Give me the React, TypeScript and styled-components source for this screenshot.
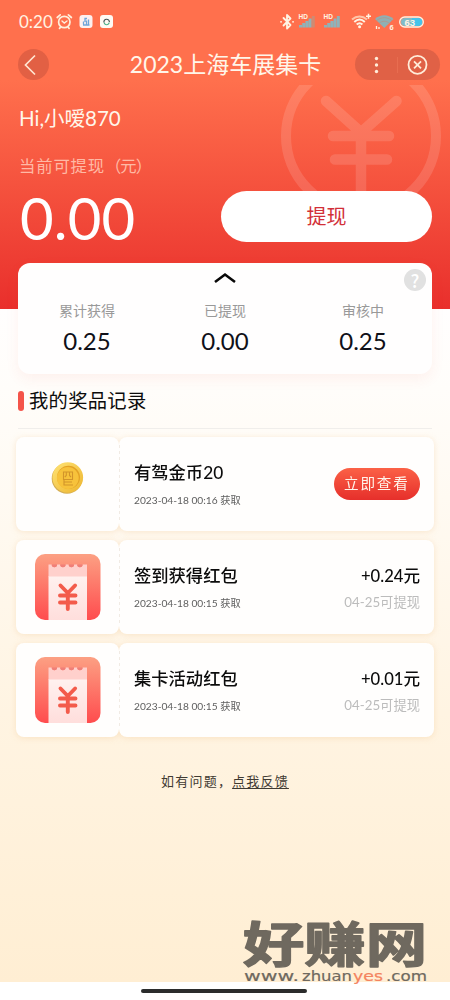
import React from "react";
import styled, { createGlobalStyle } from "styled-components";

const Global = createGlobalStyle`
  * { box-sizing: border-box; }
  body { margin: 0; background: #fff; }
`;

const Page = styled.div`
  position: relative;
  width: 450px;
  height: 1000px;
  overflow: hidden;
  display: flex;
  flex-direction: column;
  font-family: Lato, "Noto Sans CJK SC", sans-serif;
  color: #0c0c0c;
  background:
    linear-gradient(#ff704d 0, #ff704d 26%, #e92f2c 100%) 0 0 / 100% 309px no-repeat,
    linear-gradient(#fffefe 0, #fffdfa 12%, #fff4e2 60%, #ffeed3 100%) 0 309px / 100% 673px no-repeat,
    #fff;
`;

const StatusBar = styled.div`
  height: 43px;
  flex: none;
  padding: 0 24px 0 19px;
  display: flex;
  justify-content: space-between;
  color: #fff4e4;
`;

const Clock = styled.div`
  display: flex;
  align-items: center;
  font-size: 17px;
  line-height: 43px;
`;

const Time24 = styled.span`
  width: 36px;
`;

const NavBar = styled.div`
  height: 42px;
  flex: none;
  padding: 0 10px 0 18px;
  display: flex;
  align-items: center;
  justify-content: space-between;
`;

const BackButton = styled.div`
  width: 31px;
  height: 31px;
  margin-right: 54px;
  border-radius: 50%;
  background: #e26044;
`;

const Title = styled.div`
  margin-right: 7px;
  font-size: 23px;
  line-height: 42px;
  color: #fff6ea;
  white-space: nowrap;
`;

const Capsule = styled.div`
  width: 85px;
  height: 31px;
  border-radius: 16px;
  background: #e06146;
`;

const Account = styled.div`
  position: relative;
  height: 178px;
  flex: none;
  padding: 18px 18px 0 19px;
  overflow: hidden;
`;

const YenMark = styled.svg`
  position: absolute;
  left: 279px;
  top: 0;
`;

const Greeting = styled.div`
  font-size: 20.5px;
  line-height: 30px;
  color: #fff6ea;
`;

const BalanceLabel = styled.div`
  margin-top: 20px;
  font-size: 16.4px;
  line-height: 26px;
  letter-spacing: 0.8px;
  color: #ffb9a5;
`;

const Unit = styled.span`
  letter-spacing: -1px;
`;

const BalanceRow = styled.div`
  position: relative;
  margin-top: 12px;
  display: flex;
  justify-content: space-between;
  align-items: center;
  height: 51px;
`;

const Balance = styled.div`
  padding: 1px 0 0 1px;
  font-size: 58px;
  line-height: 51px;
  letter-spacing: 0.2px;
  color: #fff;
`;

const WithdrawButton = styled.div`
  width: 211px;
  height: 51px;
  border-radius: 26px;
  background: #fff;
  color: #d22f38;
  font-size: 20px;
  line-height: 51px;
  text-align: center;
`;

const Summary = styled.div`
  position: relative;
  flex: none;
  height: 111px;
  margin: 0 18px;
  border-radius: 12px;
  background: #fffefe;
  box-shadow: 0 5px 14px rgba(240, 70, 60, 0.07);
  display: flex;
  flex-direction: column;
`;

const Caret = styled.svg`
  margin: 9px auto 0;
  display: block;
`;

const Help = styled.div`
  position: absolute;
  right: 6px;
  top: 6px;
  width: 22px;
  height: 22px;
  border-radius: 50%;
  background: #e1e1e1;
  color: #fff;
  font: 500 18px/22px "Noto Sans CJK SC", sans-serif;
  text-align: center;
`;

const Stats = styled.div`
  display: grid;
  grid-template-columns: repeat(3, 1fr);
  margin-top: 17px;
  text-align: center;
`;

const StatLabel = styled.div`
  font-size: 14px;
  line-height: 20px;
  color: #999;
`;

const StatValue = styled.div`
  font-size: 24px;
  line-height: 30px;
  margin-top: 5px;
  color: #101018;
`;

const SectionHead = styled.div`
  flex: none;
  height: 55px;
  margin: 0 18px;
  border-bottom: 1px solid #f0eeeb;
  display: flex;
  align-items: center;
  gap: 5px;
  font-size: 19.3px;
  letter-spacing: 0.3px;
  line-height: 30px;
`;

const Accent = styled.i`
  width: 6px;
  height: 20px;
  border-radius: 3px;
  background: #f4544a;
`;

const Records = styled.div`
  flex: none;
  margin: 8px 16px 0;
  display: flex;
  flex-direction: column;
  gap: 9px;
`;

const Ticket = styled.div`
  height: 94px;
  display: flex;
  filter: drop-shadow(0 1px 3px rgba(235, 190, 130, 0.32));
`;

const Stub = styled.div`
  width: 103px;
  border-radius: 8px;
  background: #fffefd;
  display: flex;
  align-items: center;
  justify-content: center;
`;

const Body = styled.div`
  flex: 1;
  border-radius: 8px;
  background:
    repeating-linear-gradient(#f1ebe4 0 3px, transparent 3px 6px) 0 8px / 1px 78px no-repeat,
    #fffefd;
  padding: 0 14px 0 15px;
  display: flex;
  justify-content: space-between;
  white-space: nowrap;
`;

const Column = styled.div<{ $end?: boolean }>`
  display: flex;
  flex-direction: column;
  padding-top: 23px;
  text-align: ${(p) => (p.$end ? "right" : "left")};
`;

const Name = styled.div`
  font-size: 17.3px;
  font-weight: 500;
  line-height: 26px;
`;

const Time = styled.div`
  margin-top: 6px;
  font-size: 10.2px;
  line-height: 16px;
  color: #5e5e5e;
`;

const Amount = styled.div`
  font-size: 16.6px;
  font-weight: 500;
  line-height: 26px;
`;

const Available = styled.div`
  margin-top: 3px;
  font-size: 13.3px;
  line-height: 20px;
  color: #bcbcbc;
`;

const ViewButton = styled.div`
  align-self: center;
  width: 86px;
  height: 32px;
  border-radius: 16px;
  background: linear-gradient(#fb6146, #e62f2b);
  color: #fff4ea;
  font-size: 14.6px;
  letter-spacing: 1.8px;
  line-height: 32px;
  padding-left: 10px;
`;

const Feedback = styled.div`
  flex: none;
  margin-top: 34px;
  text-align: center;
  font-size: 13px;
  letter-spacing: 1.2px;
  line-height: 20px;
  color: #3f3a32;
`;

const FeedbackLink = styled.span`
  text-decoration: underline;
  text-underline-offset: 2px;
`;

const HomeIndicator = styled.div`
  width: 166px;
  height: 4px;
  margin: auto auto 7px 141px;
  border-radius: 2px;
  background: #2b2c2c;
`;

const Watermark = styled.svg`
  position: absolute;
  left: 238px;
  top: 890px;
`;

const StatusIcons = () => (
  <svg width="148" height="43" viewBox="279 0 148 43" fill="none">
    <g stroke="#fff4e4" strokeWidth="1.8" strokeLinejoin="round" strokeLinecap="round">
      <path d="M284.500 18l7 7-3.500 3.500v-13.500l3.500 3.500-7 7" />
      <path d="M282 21.800h.1M294 21.800h.1" />
    </g>
    {[300, 325].map((x) => (
      <g key={x}>
        <text x={x - 0.5} y="19.300" fontFamily="Liberation Sans, sans-serif" fontWeight="700" fontSize="6.500" fill="#fff4e4">
          HD
        </text>
        <path d={`M${x} 27.500v-2.500h3v2.500zM${x + 3.2} 27.500v-4.500h3v4.500zM${x + 6.4} 27.500v-6.500h3v6.500zM${x + 9.6} 27.500v-9h3v9z`} fill="#8fb3b9" />
        <path d={`M${x + 12.8} 27.500V16h3v11.500z`} fill={x === 300 ? "#d08a72" : "#8fb3b9"} />
      </g>
    ))}
    <g strokeWidth="2">
      <path d="M353 19.500c4.500-4 10.500-4 15 0" stroke="#ffc5a8" />
      <path d="M355.300 22c3.300-3 7.300-3 10.500 0M357.700 24.500c1.800-1.600 4-1.600 5.700 0" stroke="#fff4e4" />
      <path d="M367 16.300h5M369.500 13.800v5" stroke="#fff4e4" strokeWidth="1.500" />
    </g>
    <circle cx="360.600" cy="26.800" r="1.500" fill="#fff4e4" />
    <path d="M376 19c5.500-5 13-5 18.500 0L385.300 28z" fill="#8fb0b4" />
    <path d="M377.500 20.700c4.700-4 11-4 15.500 0M380 23.300c3.300-2.700 7.300-2.700 10.500 0" stroke="#c08c7c" strokeWidth=".6" />
    <path d="M377.500 26V29M380 27v2" stroke="#fff4e4" strokeWidth="1.300" />
    <text x="390.500" y="29.500" fontFamily="Liberation Sans, sans-serif" fontWeight="700" fontSize="7.500" fill="#fff4e4">6</text>
    <path d="M406 18h10.500v8H406a4 4 0 010-8z" fill="#7fbcc9" />
    <path d="M413 18h6.500a4 4 0 010 8H413z" fill="#45c3ea" />
    <rect x="400.700" y="17" width="23.600" height="10" rx="5" stroke="#fff4e4" strokeWidth="1.300" />
    <text x="405.500" y="25.500" fontFamily="Liberation Sans, sans-serif" fontWeight="700" fontSize="9.500" fill="#fff4e4">63</text>
  </svg>
);

const NotificationIcons = () => (
  <svg width="60" height="20" viewBox="55 12 60 20" fill="none">
    <g stroke="#fff0dc" strokeWidth="1.700" strokeLinecap="round">
      <circle cx="64.300" cy="22" r="5.700" />
      <path d="M57.200 17.500l3-2.600M71.400 17.500l-3-2.600M60.300 27.500l-.8.900M68.300 27.500l.8.900" />
      <path d="M62 21l2.300 2 2.700-2" strokeWidth="1.400" />
    </g>
    <rect x="79.500" y="15" width="13" height="13" rx="3" fill="#fdf0ef" />
    <path d="M83.500 24.500v-3M85 22v-3.500h2M86.500 24.500v-4M88.500 24.500v-5M83 25h6.500" stroke="#6fa5da" strokeWidth="1.300" />
    <rect x="100" y="15" width="13" height="13" rx="3" fill="#fffaf5" />
    <path d="M104 22.500c-.8-4 5.500-4.500 5.400-.4" stroke="#465354" strokeWidth="1.200" />
    <path d="M104.200 22.500c.4 3 4.400 3 5 0" stroke="#4fb28b" strokeWidth="1.200" />
  </svg>
);

const RedPacket = () => (
  <svg width="66" height="66" viewBox="0 0 66 66">
    <defs>
      <linearGradient id="packet" x1="0" y1="0" x2="0" y2="1">
        <stop offset="0" stopColor="#fca083" />
        <stop offset="1" stopColor="#ff4c4e" />
      </linearGradient>
      <linearGradient id="paper" x1="0" y1="0" x2="0" y2="1">
        <stop offset="0" stopColor="#fff1ef" />
        <stop offset="1" stopColor="#ffdedc" />
      </linearGradient>
    </defs>
    <rect width="65.500" height="66" rx="10" fill="url(#packet)" />
    <path d="M13.500 22H52v44H13.500z" fill="url(#paper)" />
    <path
      d="M13.500 10.500h3.200a2.700 2.700 0 005.400 0h3.100a2.700 2.700 0 005.400 0h3.100a2.700 2.700 0 005.400 0h3.100a2.700 2.700 0 005.400 0H52v12H13.500z"
      fill="#ffd0cc"
    />
    <path
      d="M16.700 10.500a2.700 2.700 0 005.400 0zM25.200 10.500a2.700 2.700 0 005.400 0zM33.700 10.500a2.700 2.700 0 005.400 0zM42.200 10.500a2.700 2.700 0 005.400 0z"
      fill="#f07f78"
    />
    <path d="M25.500 31.500l7.300 7.500 7.300-7.500M25 41.500h15.500M25 48.500h15.500M32.800 39v16" fill="none" stroke="#f35b4b" strokeWidth="3.900" strokeLinecap="round" strokeLinejoin="round" />
  </svg>
);

const CoinImage = styled.svg`
  margin-bottom: 12px;
`;

const Coin = () => (
  <CoinImage width="34" height="34" viewBox="0 0 34 34">
    <defs>
      <linearGradient id="coin" x1="0" y1="0" x2="1" y2="1">
        <stop offset="0" stopColor="#ffe374" />
        <stop offset="1" stopColor="#edb52f" />
      </linearGradient>
    </defs>
    <ellipse cx="16" cy="17.500" rx="15.300" ry="15.300" fill="#d5ae52" />
    <circle cx="16.800" cy="16.500" r="15.300" fill="url(#coin)" />
    <circle cx="17.500" cy="16.300" r="11.500" fill="#e3a124" />
    <circle cx="16.800" cy="17" r="10.900" fill="#f7c23b" />
    <path d="M12.500 11v7.500h9v-7.500zM15.300 11.500v3l-1.500 1.500M18.500 11.500v3l1.500 1.500M13 21h8M13 18.500v5.500h9" fill="none" stroke="#d2942a" strokeWidth="1.100" />
  </CoinImage>
);

const stats = [
  ["累计获得", "0.25"],
  ["已提现", "0.00"],
  ["审核中", "0.25"],
];

const records = [
  { name: "有驾金币20", time: "2023-04-18 00:16 获取" },
  { name: "签到获得红包", time: "2023-04-18 00:15 获取", amount: "+0.24元" },
  { name: "集卡活动红包", time: "2023-04-18 00:15 获取", amount: "+0.01元" },
];

export default function App() {
  return (
    <Page>
      <Global />
      <StatusBar>
        <Clock>
          <Time24>0:20</Time24>
          <NotificationIcons />
        </Clock>
        <StatusIcons />
      </StatusBar>
      <NavBar>
        <BackButton>
          <svg width="31" height="31" viewBox="0 0 31 31" fill="none" stroke="#ffe6d2" strokeWidth="1.700">
            <path d="M17 6.500L7.500 16l9.500 9.500" />
          </svg>
        </BackButton>
        <Title>2023上海车展集卡</Title>
        <Capsule>
          <svg width="85" height="31" viewBox="0 0 85 31" fill="none" stroke="#ffecd9" strokeWidth="1.800">
            <g fill="#ffecd9" stroke="none">
              <circle cx="21.500" cy="9.500" r="1.700" />
              <circle cx="21.500" cy="16" r="1.700" />
              <circle cx="21.500" cy="22.500" r="1.700" />
            </g>
            <path d="M42.500 8v16" stroke="#e86d50" strokeWidth="1" />
            <circle cx="62.500" cy="15.800" r="9" />
            <path d="M59 12.300l7 7M66 12.300l-7 7" />
          </svg>
        </Capsule>
      </NavBar>
      <Account>
        <YenMark width="165" height="110" viewBox="279 85 165 110" fill="none" stroke="#fff" opacity=".13">
          <circle cx="361" cy="136" r="75" strokeWidth="10" />
          <path
            d="M326 101l35 31.500 35.500-31.500M333 136h56M335 159.500h52M361 133v65"
            strokeWidth="10.500"
            strokeLinecap="round"
            strokeLinejoin="round"
          />
        </YenMark>
        <Greeting>Hi,小嗳870</Greeting>
        <BalanceLabel>
          当前可提现<Unit>（元）</Unit>
        </BalanceLabel>
        <BalanceRow>
          <Balance>0.00</Balance>
          <WithdrawButton>提现</WithdrawButton>
        </BalanceRow>
      </Account>
      <Summary>
        <Caret width="24" height="12" viewBox="0 0 24 12" fill="none" stroke="#080808" strokeWidth="2.600">
          <path d="M2 10l10-7.500 10 7.500" />
        </Caret>
        <Help>?</Help>
        <Stats>
          {stats.map(([label, value]) => (
            <div key={label}>
              <StatLabel>{label}</StatLabel>
              <StatValue>{value}</StatValue>
            </div>
          ))}
        </Stats>
      </Summary>
      <SectionHead>
        <Accent />
        我的奖品记录
      </SectionHead>
      <Records>
        {records.map((r) => (
          <Ticket key={r.name}>
            <Stub>{r.amount ? <RedPacket /> : <Coin />}</Stub>
            <Body>
              <Column>
                <Name>{r.name}</Name>
                <Time>{r.time}</Time>
              </Column>
              {r.amount ? (
                <Column $end>
                  <Amount>{r.amount}</Amount>
                  <Available>04-25可提现</Available>
                </Column>
              ) : (
                <ViewButton>立即查看</ViewButton>
              )}
            </Body>
          </Ticket>
        ))}
      </Records>
      <Feedback>
        如有问题，<FeedbackLink>点我反馈</FeedbackLink>
      </Feedback>
      <HomeIndicator />
      <Watermark width="206" height="108" viewBox="238 890 206 108" fill="#6f695f">
        <text
          transform="translate(243 961.500) scale(1.040 .8)"
          fontFamily="Noto Sans CJK SC, sans-serif"
          fontWeight="700"
          fontSize="59"
          stroke="#6f695f"
          strokeWidth="1.800"
          strokeLinejoin="round"
        >
          好赚网
        </text>
        <g fontFamily="DejaVu Sans, sans-serif" fontSize="14.500" stroke="#6f695f" strokeWidth=".2">
          <text x="244" y="981" textLength="55" lengthAdjust="spacingAndGlyphs">www.</text>
          <text x="302" y="981" textLength="50" lengthAdjust="spacingAndGlyphs">zhuan</text>
          <text x="353" y="981" textLength="30" lengthAdjust="spacingAndGlyphs" fill="#f4835e" stroke="#f4835e">yes</text>
          <text x="386" y="981" textLength="41" lengthAdjust="spacingAndGlyphs">.com</text>
        </g>
      </Watermark>
    </Page>
  );
}
